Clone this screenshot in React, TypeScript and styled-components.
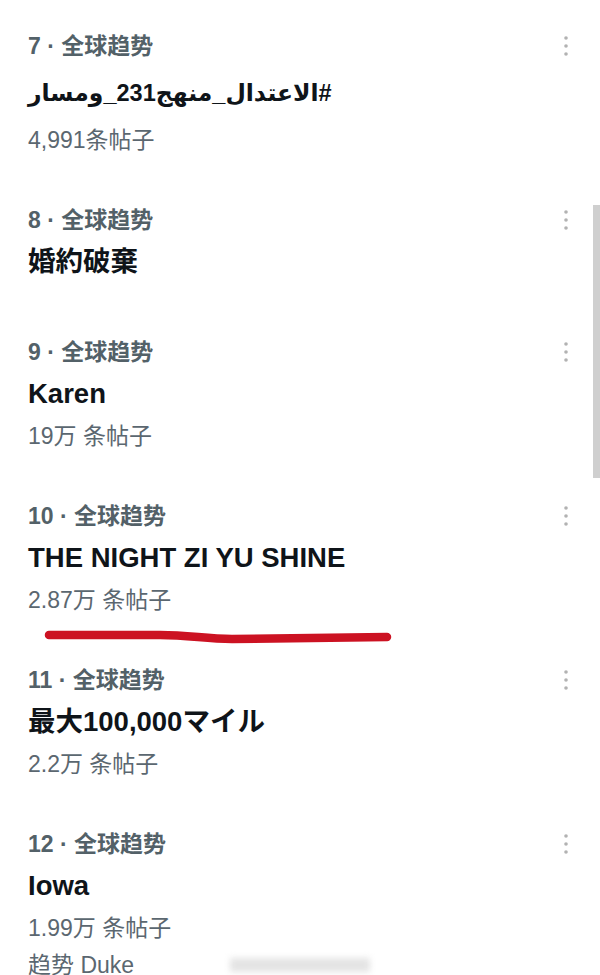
import styled, { createGlobalStyle } from "styled-components";

type Trend = {
  rank: number;
  title: string;
  count?: string;
  extra?: string;
  rtl?: boolean;
};

const trends: Trend[] = [
  { rank: 7, title: "#الاعتدال_منهج231_ومسار", count: "4,991条帖子", rtl: true },
  { rank: 8, title: "婚約破棄" },
  { rank: 9, title: "Karen", count: "19万 条帖子" },
  { rank: 10, title: "THE NIGHT ZI YU SHINE", count: "2.87万 条帖子" },
  { rank: 11, title: "最大100,000マイル", count: "2.2万 条帖子" },
  { rank: 12, title: "Iowa", count: "1.99万 条帖子", extra: "趋势 Duke" },
];

const GlobalStyle = createGlobalStyle`
  html, body {
    margin: 0;
    padding: 0;
    background: #ffffff;
    overflow: hidden;
  }
  body {
    font-family: "Liberation Sans", "Noto Sans CJK SC", "DejaVu Sans", sans-serif;
  }
`;

const Page = styled.div`
  position: relative;
  width: 600px;
  height: 975px;
  overflow: hidden;
  background: #fff;
`;

const List = styled.div`
  display: flex;
  flex-direction: column;
  gap: 38px;
  padding: 25px 29px 0 28px;
`;

const Item = styled.div<{ $short?: boolean }>`
  display: flex;
  align-items: flex-start;
  justify-content: space-between;
  padding-bottom: ${(p) => (p.$short ? "10px" : "0")};
`;

const Body = styled.div`
  display: flex;
  flex-direction: column;
`;

const Meta = styled.div`
  font-size: 23px;
  line-height: 42px;
  font-weight: 700;
  color: #536168;
  font-family: "Liberation Sans", "Noto Sans CJK SC", sans-serif;
`;

const Title = styled.div<{ $rtl?: boolean }>`
  font-size: ${(p) => (p.$rtl ? "23.5px" : "27.5px")};
  line-height: ${(p) => (p.$rtl ? "52px" : "42px")};
  font-weight: 700;
  color: #0f1419;
  text-align: left;
  unicode-bidi: plaintext;
  font-family: "Liberation Sans", "DejaVu Sans", "Noto Sans CJK JP", sans-serif;
`;

const Count = styled.div`
  font-size: 23px;
  line-height: 42px;
  color: #5b6770;
  font-family: "Liberation Sans", "Noto Sans CJK SC", sans-serif;
`;

const Extra = styled.div`
  display: flex;
  align-items: center;
  gap: 96px;
  font-size: 23px;
  line-height: 32px;
  color: #5b6770;
  font-family: "Liberation Sans", "Noto Sans CJK SC", sans-serif;
`;

const Blur = styled.span`
  display: inline-block;
  width: 140px;
  height: 14px;
  background: #e4e4e4;
  filter: blur(3px);
`;

const More = styled.svg`
  margin-top: 8px;
  flex: none;
`;

const Scrollbar = styled.div`
  position: absolute;
  right: 0;
  top: 205px;
  width: 7px;
  height: 273px;
  background: #cfcfcf;
`;

const Marker = styled.svg`
  position: absolute;
  left: 0;
  top: 621px;
`;

const Dots = () => (
  <More width="10" height="26" viewBox="0 0 10 26">
    <circle cx="5" cy="5" r="1.8" fill="#b2b2b2" />
    <circle cx="5" cy="13" r="1.8" fill="#b2b2b2" />
    <circle cx="5" cy="21" r="1.8" fill="#b2b2b2" />
  </More>
);

export default function App() {
  return (
    <Page>
      <GlobalStyle />
      <List>
        {trends.map((t) => (
          <Item key={t.rank} $short={!t.count}>
            <Body>
              <Meta>{t.rank} · 全球趋势</Meta>
              <Title $rtl={t.rtl} dir={t.rtl ? "rtl" : undefined}>
                {t.title}
              </Title>
              {t.count && <Count>{t.count}</Count>}
              {t.extra && (
                <Extra>
                  {t.extra}
                  <Blur />
                </Extra>
              )}
            </Body>
            <Dots />
          </Item>
        ))}
      </List>
      <Marker width="420" height="30" viewBox="0 0 420 30">
        <path
          d="M49 14 L160 14 C190 14 205 18 232 18 L387 16"
          fill="none"
          stroke="#cc1222"
          strokeWidth="8.5"
          strokeLinecap="round"
        />
      </Marker>
      <Scrollbar />
    </Page>
  );
}
